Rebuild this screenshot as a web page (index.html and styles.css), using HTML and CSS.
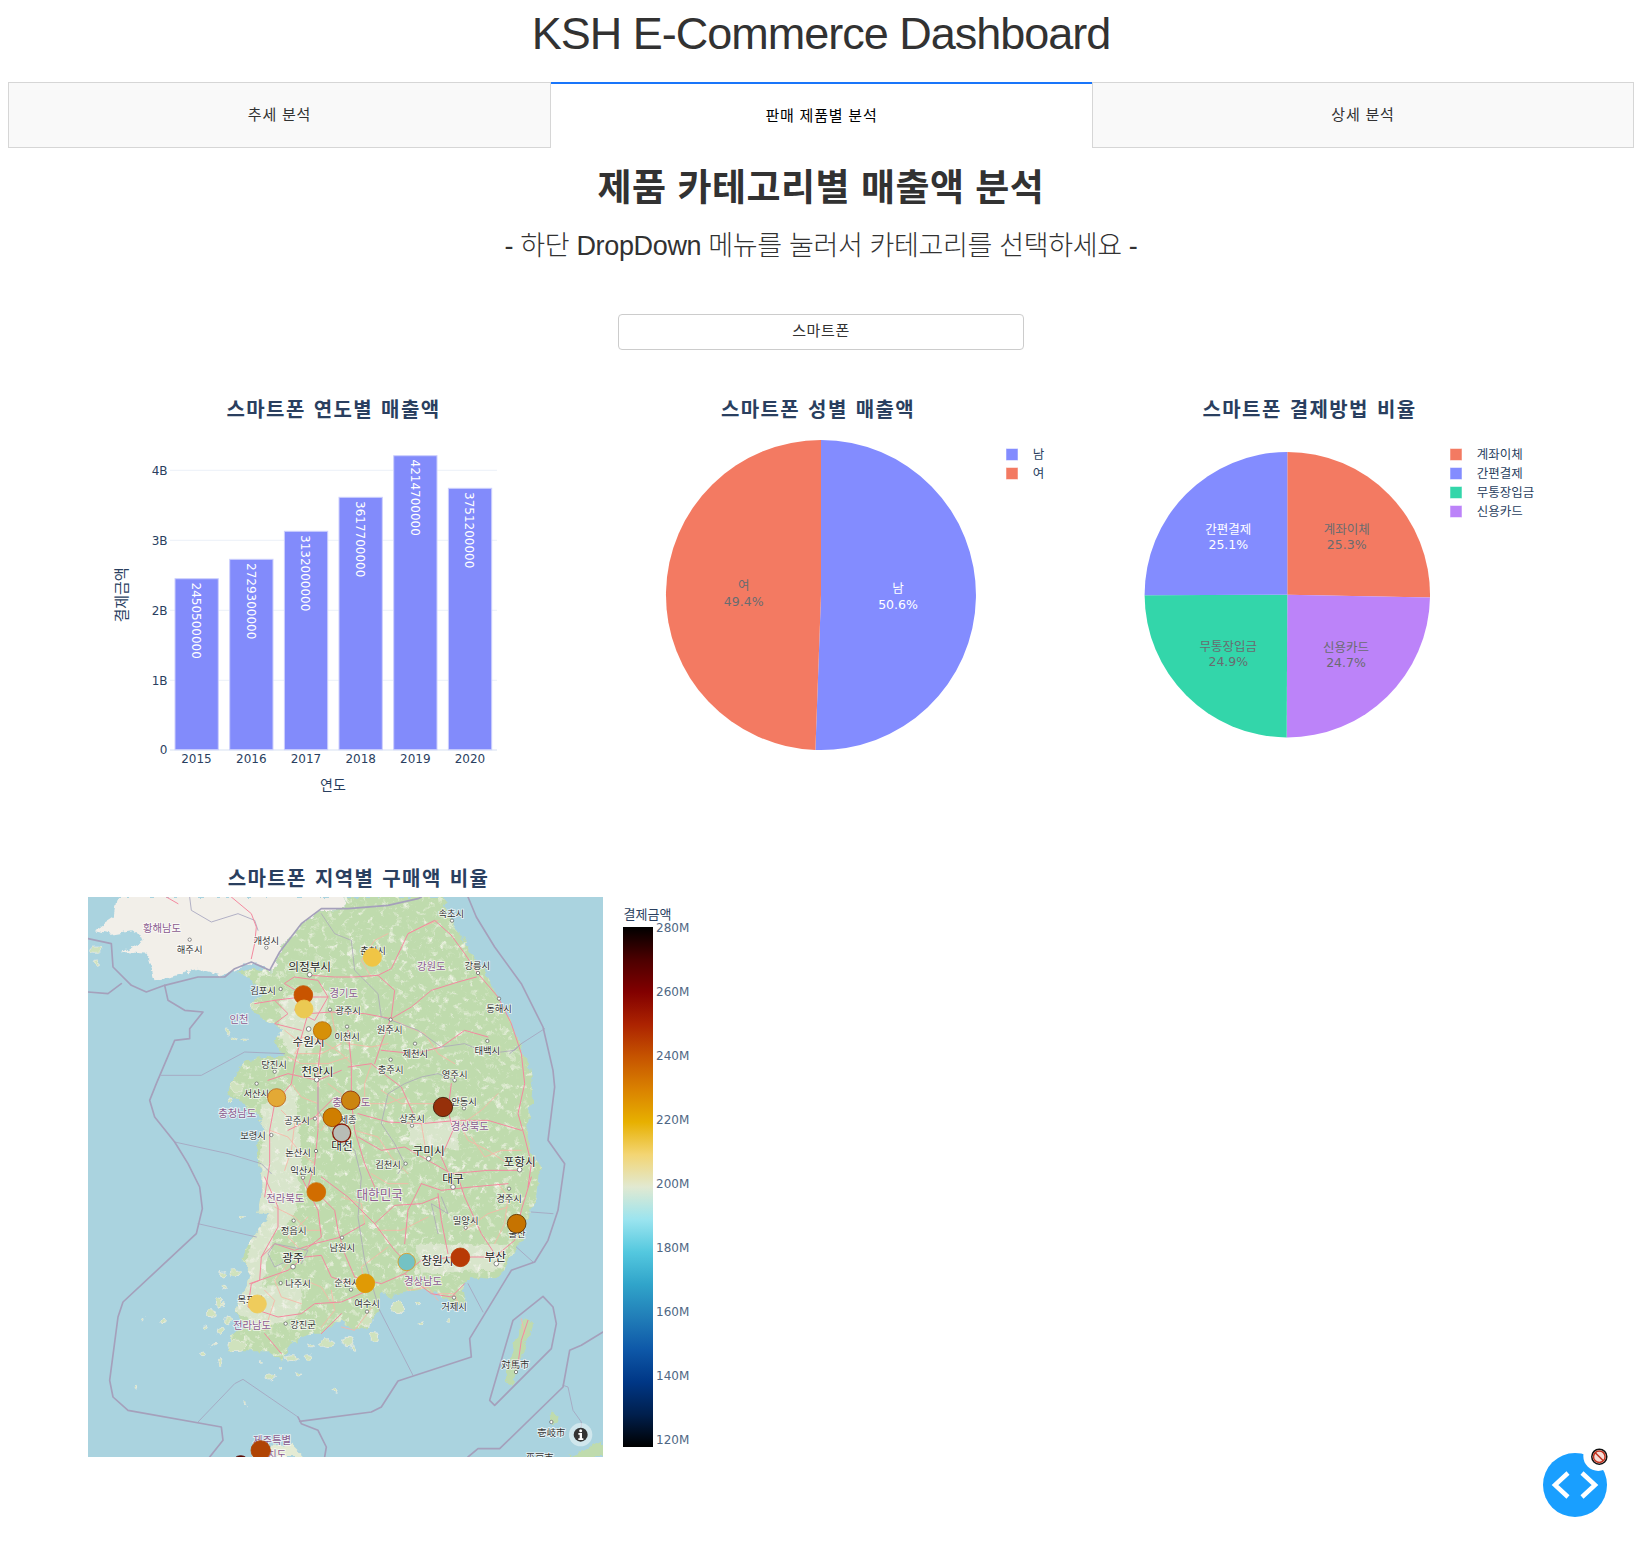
FILE: index.html
```html
<!DOCTYPE html>
<html lang="ko">
<head>
<meta charset="utf-8">
<title>KSH E-Commerce Dashboard</title>
<link rel="stylesheet" href="styles.css">
</head>
<body>
<h1 class="page-title">KSH E-Commerce Dashboard</h1>
<nav class="tabs">
  <div class="tab">추세 분석</div>
  <div class="tab tab-active">판매 제품별 분석</div>
  <div class="tab">상세 분석</div>
</nav>
<h2 class="section-title">제품 카테고리별 매출액 분석</h2>
<h3 class="section-sub">- 하단 DropDown 메뉴를 눌러서 카테고리를 선택하세요 -</h3>
<div class="dropdown-row"><div class="dropdown">스마트폰</div></div>

<section class="charts">
  <svg class="chart" viewBox="8 390 542 470" width="542" height="470">
    <text class="chart-title" x="333.5" y="408">스마트폰 연도별 매출액</text>
    <g class="grid">
      <line x1="170" x2="497" y1="470.3" y2="470.3"/>
      <line x1="170" x2="497" y1="540.3" y2="540.3"/>
      <line x1="170" x2="497" y1="610.3" y2="610.3"/>
      <line x1="170" x2="497" y1="680.3" y2="680.3"/>
    </g>
    <line class="zero" x1="170" x2="497" y1="750" y2="750"/>
    <g class="bars">
      <rect x="175" y="578.7" width="43.3" height="171"/>
      <rect x="229.7" y="559.3" width="43.3" height="190.4"/>
      <rect x="284.4" y="531.3" width="43.3" height="218.4"/>
      <rect x="339" y="497.3" width="43.3" height="252.4"/>
      <rect x="393.7" y="455.7" width="43.3" height="294"/>
      <rect x="448.4" y="488.3" width="43.3" height="261.4"/>
    </g>
    <g class="bar-labels">
      <text transform="translate(195.8 582.5) rotate(90)">2450500000</text>
      <text transform="translate(250.6 563) rotate(90)">2729300000</text>
      <text transform="translate(305.3 535) rotate(90)">3132000000</text>
      <text transform="translate(360 501) rotate(90)">3617700000</text>
      <text transform="translate(414.6 459.5) rotate(90)">4214700000</text>
      <text transform="translate(469.3 492) rotate(90)">3751200000</text>
    </g>
    <g class="y-ticks">
      <text x="167.5" y="471">4B</text>
      <text x="167.5" y="541">3B</text>
      <text x="167.5" y="610.5">2B</text>
      <text x="167.5" y="680.5">1B</text>
      <text x="167.5" y="750">0</text>
    </g>
    <g class="x-ticks">
      <text x="196.5" y="754">2015</text>
      <text x="251.3" y="754">2016</text>
      <text x="306" y="754">2017</text>
      <text x="360.7" y="754">2018</text>
      <text x="415.3" y="754">2019</text>
      <text x="470" y="754">2020</text>
    </g>
    <text class="axis-title" x="333" y="785">연도</text>
    <text class="axis-title axis-title-y" transform="translate(122 595) rotate(-90)">결제금액</text>
  </svg>

  <svg class="chart" viewBox="550 390 542 470" width="542" height="470">
    <text class="chart-title" x="818" y="408">스마트폰 성별 매출액</text>
    <path class="slice-blue" d="M821 595 L821 440 A155 155 0 1 1 815.4 749.9 Z"/>
    <path class="slice-red" d="M821 595 L815.4 749.9 A155 155 0 0 1 821 440 Z"/>
    <g class="pie-text-light">
      <text x="898" y="588">남</text>
      <text x="898" y="604">50.6%</text>
    </g>
    <g class="pie-text-dark">
      <text x="743.7" y="585">여</text>
      <text x="743.7" y="601.5">49.4%</text>
    </g>
    <rect class="swatch slice-blue" x="1006" y="448.5" width="12" height="12"/>
    <rect class="swatch slice-red" x="1006" y="467.5" width="12" height="12"/>
    <text class="legend-text" x="1032.7" y="454.3">남</text>
    <text class="legend-text" x="1032.7" y="473.3">여</text>
  </svg>

  <svg class="chart" viewBox="1092 390 542 470" width="542" height="470">
    <text class="chart-title" x="1309.5" y="408">스마트폰 결제방법 비율</text>
    <path class="slice-red" d="M1287.3 594.7 L1287.3 452 A142.7 142.7 0 0 1 1430 597.4 Z"/>
    <path class="slice-purple" d="M1287.3 594.7 L1430 597.4 A142.7 142.7 0 0 1 1286.7 737.4 Z"/>
    <path class="slice-green" d="M1287.3 594.7 L1286.7 737.4 A142.7 142.7 0 0 1 1144.6 595.3 Z"/>
    <path class="slice-blue" d="M1287.3 594.7 L1144.6 595.3 A142.7 142.7 0 0 1 1287.3 452 Z"/>
    <g class="pie-text-light">
      <text x="1228.3" y="529.5">간편결제</text>
      <text x="1228.3" y="544">25.1%</text>
    </g>
    <g class="pie-text-dark">
      <text x="1346.7" y="529">계좌이체</text>
      <text x="1346.7" y="544">25.3%</text>
      <text x="1228.3" y="646">무통장입금</text>
      <text x="1228.3" y="661">24.9%</text>
      <text x="1346" y="647">신용카드</text>
      <text x="1346" y="662">24.7%</text>
    </g>
    <rect class="swatch slice-red" x="1450" y="448.5" width="12" height="12"/>
    <rect class="swatch slice-blue" x="1450" y="467.5" width="12" height="12"/>
    <rect class="swatch slice-green" x="1450" y="486.5" width="12" height="12"/>
    <rect class="swatch slice-purple" x="1450" y="505.5" width="12" height="12"/>
    <text class="legend-text" x="1476.7" y="454.3">계좌이체</text>
    <text class="legend-text" x="1476.7" y="473.3">간편결제</text>
    <text class="legend-text" x="1476.7" y="492.3">무통장입금</text>
    <text class="legend-text" x="1476.7" y="511.5">신용카드</text>
  </svg>
</section>

<section class="map-section">
  <svg class="map-chart" viewBox="8 860 720 692" width="720" height="692">
    <defs>
      <linearGradient id="icefire" x1="0" y1="1" x2="0" y2="0">
        <stop offset="0" stop-color="#000000"/>
        <stop offset="0.0625" stop-color="#001f4d"/>
        <stop offset="0.125" stop-color="#003786"/>
        <stop offset="0.1875" stop-color="#0e58a8"/>
        <stop offset="0.25" stop-color="#217eb8"/>
        <stop offset="0.3125" stop-color="#30a4ca"/>
        <stop offset="0.375" stop-color="#54c8df"/>
        <stop offset="0.4375" stop-color="#9be4ef"/>
        <stop offset="0.5" stop-color="#e1e9d1"/>
        <stop offset="0.5625" stop-color="#f3d573"/>
        <stop offset="0.625" stop-color="#e7b000"/>
        <stop offset="0.6875" stop-color="#da8200"/>
        <stop offset="0.75" stop-color="#c65400"/>
        <stop offset="0.8125" stop-color="#ac2301"/>
        <stop offset="0.875" stop-color="#820000"/>
        <stop offset="0.9375" stop-color="#4c0000"/>
        <stop offset="1" stop-color="#000000"/>
      </linearGradient>
      <clipPath id="land-clip">
        <path d="M560 225 L580 150 L640 80 L700 40 L770 35 L770 0 L1062 0 L1090 70 L1140 150 L1200 240 L1235 310 L1280 400 L1320 500 L1335 570 L1325 640 L1315 720 L1335 780 L1365 810 L1350 840 L1345 900 L1325 950 L1300 1030 L1270 1080 L1240 1130 L1200 1145 L1150 1140 L1125 1165 L1135 1215 L1100 1230 L1060 1195 L1000 1180 L950 1190 L900 1200 L880 1180 L870 1240 L840 1290 L790 1300 L760 1270 L700 1310 L660 1310 L600 1350 L585 1395 L540 1360 L470 1360 L420 1360 L430 1320 L470 1280 L440 1240 L470 1180 L490 1130 L460 1080 L500 1010 L550 950 L510 950 L520 900 L520 820 L505 740 L530 690 L505 650 L465 620 L415 590 L445 530 L475 490 L540 480 L590 480 L555 430 L585 400 L535 370 L495 340 L485 320 L525 290 L485 240 L445 225 L500 215 Z"/>
      </clipPath>
      <filter id="mottle" x="0" y="0" width="100%" height="100%">
        <feTurbulence type="fractalNoise" baseFrequency="0.05" numOctaves="3" seed="7"/>
        <feColorMatrix type="matrix" values="0 0 0 0 0.93  0 0 0 0 0.93  0 0 0 0 0.86  3 0 0 0 -1.65"/>
      </filter>
      <filter id="rough" x="-5%" y="-5%" width="110%" height="110%">
        <feTurbulence type="fractalNoise" baseFrequency="0.04" numOctaves="3" seed="3" result="noise"/>
        <feDisplacementMap in="SourceGraphic" in2="noise" scale="24" xChannelSelector="R" yChannelSelector="G"/>
      </filter>
    </defs>

    <text class="chart-title" x="358.5" y="877">스마트폰 지역별 구매액 비율</text>

    <svg x="88" y="897" width="515" height="560" viewBox="0 0 1545 1680">
      <rect class="sea" width="1545" height="1680"/>
      <g class="rough">
        <path class="north" d="M90 0 L80 60 L20 100 L70 110 L130 100 L170 125 L105 165 L180 170 L200 250 L270 235 L330 215 L400 235 L470 205 L495 195 L540 222 L560 225 L580 150 L640 80 L700 40 L770 35 L770 0 Z"/>
        <path class="land" d="M560 225 L580 150 L640 80 L700 40 L770 35 L770 0 L1062 0 L1090 70 L1140 150 L1200 240 L1235 310 L1280 400 L1320 500 L1335 570 L1325 640 L1315 720 L1335 780 L1365 810 L1350 840 L1345 900 L1325 950 L1300 1030 L1270 1080 L1240 1130 L1200 1145 L1150 1140 L1125 1165 L1135 1215 L1100 1230 L1060 1195 L1000 1180 L950 1190 L900 1200 L880 1180 L870 1240 L840 1290 L790 1300 L760 1270 L700 1310 L660 1310 L600 1350 L585 1395 L540 1360 L470 1360 L420 1360 L430 1320 L470 1280 L440 1240 L470 1180 L490 1130 L460 1080 L500 1010 L550 950 L510 950 L520 900 L520 820 L505 740 L530 690 L505 650 L465 620 L415 590 L445 530 L475 490 L540 480 L590 480 L555 430 L585 400 L535 370 L495 340 L485 320 L525 290 L485 240 L445 225 L500 215 Z"/>
        <g clip-path="url(#land-clip)">
          <rect class="mottle" width="1545" height="1680"/>
          <path class="west-fields" d="M520 620 L620 560 L640 800 L620 960 L560 1010 L520 1170 L640 1150 L640 1250 L520 1300 L440 1240 L500 1000 L520 820 Z"/>
          <path class="west-fields" d="M580 300 L720 280 L700 440 L620 480 L570 420 Z"/>
          <path class="west-fields" d="M980 1040 L1260 1040 L1240 1120 L1000 1130 Z"/>
          <path class="west-fields" d="M960 680 L1120 660 L1110 760 L960 740 Z"/>
        </g>
        <path class="land" d="M1320 1265 L1335 1280 L1310 1350 L1290 1400 L1275 1460 L1250 1450 L1260 1410 L1285 1320 L1300 1275 Z"/>
        <path class="land" d="M1385 1540 L1412 1560 L1400 1585 L1380 1570 Z"/>
        <path class="land" d="M1545 1630 L1490 1660 L1440 1680 L1545 1680 Z"/>
        <path class="jeju" d="M490 1680 L500 1655 L560 1645 L610 1640 L640 1670 L640 1680 Z"/>
        <g class="isles">
          <ellipse cx="25" cy="158" rx="14" ry="8"/><ellipse cx="25" cy="200" rx="6" ry="5"/>
          <ellipse cx="500" cy="325" rx="13" ry="9"/><ellipse cx="415" cy="405" rx="8" ry="6"/><ellipse cx="440" cy="425" rx="7" ry="5"/><ellipse cx="470" cy="430" rx="8" ry="4"/>
          <ellipse cx="445" cy="570" rx="18" ry="12"/><ellipse cx="425" cy="610" rx="10" ry="7"/><ellipse cx="405" cy="1132" rx="10" ry="8"/><ellipse cx="440" cy="1130" rx="14" ry="9"/>
          <ellipse cx="370" cy="1250" rx="12" ry="12"/><ellipse cx="395" cy="1215" rx="10" ry="12"/><ellipse cx="400" cy="1300" rx="9" ry="12"/><ellipse cx="445" cy="1345" rx="28" ry="16"/>
          <ellipse cx="460" cy="962" rx="6" ry="6"/><ellipse cx="225" cy="1272" rx="7" ry="8"/><ellipse cx="162" cy="1264" rx="3" ry="5"/><ellipse cx="142" cy="1470" rx="4" ry="6"/>
          <ellipse cx="395" cy="1395" rx="8" ry="7"/><ellipse cx="345" cy="1372" rx="7" ry="4"/><ellipse cx="545" cy="1440" rx="14" ry="9"/><ellipse cx="625" cy="1434" rx="7" ry="6"/>
          <ellipse cx="740" cy="1480" rx="5" ry="6"/><ellipse cx="610" cy="1385" rx="18" ry="9"/><ellipse cx="660" cy="1380" rx="12" ry="7"/><ellipse cx="720" cy="1340" rx="26" ry="12"/>
          <ellipse cx="780" cy="1335" rx="18" ry="14"/><ellipse cx="860" cy="1320" rx="12" ry="10"/><ellipse cx="835" cy="1270" rx="20" ry="16"/><ellipse cx="930" cy="1230" rx="14" ry="20"/>
          <ellipse cx="990" cy="1218" rx="8" ry="5"/><ellipse cx="1000" cy="1280" rx="8" ry="4"/><ellipse cx="1085" cy="1275" rx="6" ry="4"/><ellipse cx="475" cy="1520" rx="4" ry="3"/>
          <ellipse cx="410" cy="1170" rx="8" ry="5"/><ellipse cx="350" cy="1290" rx="8" ry="6"/><ellipse cx="420" cy="1270" rx="7" ry="9"/><ellipse cx="375" cy="1340" rx="5" ry="4"/>
          <ellipse cx="520" cy="1395" rx="6" ry="4"/><ellipse cx="580" cy="1410" rx="6" ry="4"/><ellipse cx="670" cy="1345" rx="8" ry="5"/><ellipse cx="795" cy="1355" rx="6" ry="8"/>
        </g>
      </g>
      <g class="border-thin">
        <path d="M220 535 L340 535 L470 465 L590 470"/>
        <path d="M260 735 L420 770 L520 800 L550 830"/>
        <path d="M330 980 L505 1020"/>
        <path d="M330 1575 L440 1460 L465 1447 L630 1560"/>
        <path d="M975 1435 L875 1240"/>
        <path d="M1140 1160 L1185 1245"/>
        <path d="M1285 1050 L1335 1095"/>
        <path d="M1330 945 L1395 950"/>
        <path d="M1265 470 L1300 440 L1370 395"/>
        <path d="M1425 1465 L1440 1470 L1455 1540 L1480 1575 L1480 1610"/>
        <path d="M305 0 L310 40 L370 75 L450 50 L500 70 L510 100"/>
      </g>
      <g class="roads-minor">
        <path d="M960 110 L1000 90 L1050 70"/>
        <path d="M850 240 L820 190 L860 130 L900 110"/>
        <path d="M910 365 L960 390 L1010 410 L1050 470 L1100 500"/>
        <path d="M730 345 L740 400 L780 440 L850 450 L900 440"/>
        <path d="M640 420 L700 430 L760 470 L790 500"/>
        <path d="M850 500 L830 560 L830 620 L900 620 L950 600"/>
        <path d="M610 560 L640 600 L690 620"/>
        <path d="M545 700 L600 720 L640 770 L680 800"/>
        <path d="M800 700 L870 720 L910 780 L960 830"/>
        <path d="M1000 680 L1010 740 L1020 790"/>
        <path d="M1110 670 L1140 730 L1200 760 L1260 800"/>
        <path d="M1095 700 L1180 640 L1230 590"/>
        <path d="M560 930 L620 960 L660 1000 L700 1000"/>
        <path d="M870 1000 L940 1000 L980 980 L1020 960"/>
        <path d="M600 1100 L560 1150 L580 1200 L640 1220"/>
        <path d="M650 1150 L700 1170 L730 1220"/>
        <path d="M730 1180 L740 1240 L700 1290"/>
        <path d="M950 1150 L960 1180 L1020 1170 L1050 1210"/>
        <path d="M1050 1190 L1100 1190 L1110 1220"/>
        <path d="M760 1290 L800 1300 L860 1220"/>
        <path d="M1130 1000 L1200 950 L1260 930"/>
        <path d="M1300 1265 L1310 1310"/>
        <path d="M590 400 L640 440 L620 470 L700 470 L760 440"/>
        <path d="M600 480 L640 500 L720 500 L780 480"/>
        <path d="M720 560 L760 590 L740 640 L700 700"/>
        <path d="M880 580 L940 620 L1000 620 L1060 620"/>
        <path d="M580 640 L620 680 L610 760 L590 820"/>
        <path d="M850 830 L900 860 L960 860"/>
        <path d="M1150 720 L1190 780 L1240 760 L1300 760"/>
        <path d="M1230 860 L1260 900 L1250 980 L1220 1040"/>
        <path d="M760 900 L820 920 L830 980"/>
        <path d="M660 960 L600 1020 L640 1060"/>
        <path d="M900 1050 L860 1080 L820 1110 L830 1160"/>
        <path d="M530 1180 L560 1210 L530 1300"/>
      </g>
      <g class="roads">
        <path d="M1090 115 L1040 70 L960 110 L910 215 L870 235 L800 240 L740 240 L670 235"/>
        <path d="M1090 115 L1130 170 L1170 230 L1230 300 L1270 380 L1300 470 L1310 560 L1290 650 L1310 720 L1330 800 L1320 870"/>
        <path d="M870 235 L920 280 L910 360 L880 440 L860 500"/>
        <path d="M1165 240 L1110 255 L1030 280 L970 330 L910 365 L830 350 L730 345 L660 350"/>
        <path d="M660 350 L640 420 L620 500 L610 560 L560 620 L545 700 L545 800 L530 900"/>
        <path d="M700 430 L690 520 L690 620 L690 700 L680 800 L660 870"/>
        <path d="M780 400 L790 500 L790 610 L800 700 L830 800 L860 870"/>
        <path d="M1090 560 L1080 640 L1095 700 L1060 780 L1095 860"/>
        <path d="M810 650 L900 675 L1000 680 L1110 670 L1200 670 L1300 700"/>
        <path d="M500 320 L560 310 L640 300 L720 300"/>
        <path d="M880 460 L980 470 L1060 450 L1130 400 L1200 420"/>
        <path d="M780 510 L850 500 L900 540 L940 570 L980 660"/>
        <path d="M540 550 L600 530 L690 550 L760 520"/>
        <path d="M810 720 L880 760 L950 750 L1020 790 L1090 830 L1200 820 L1290 820"/>
        <path d="M600 700 L680 660 L740 600"/>
        <path d="M590 260 L640 290 L620 340 L680 370 L720 300 L690 250 L620 240 Z"/>
        <path d="M560 310 L600 350 L560 380 L640 400"/>
        <path d="M235 0 L270 20"/>
        <path d="M430 0 L490 50 L505 90 L500 140 L490 185"/>
        <path d="M685 885 L740 940 L750 1000 L770 1070 L800 1140 L880 1160 L950 1130 L1000 1090 L1100 1080 L1220 1080 L1280 1030 L1300 940 L1330 840"/>
        <path d="M530 840 L570 930 L570 990 L520 1080 L515 1150 L490 1160 L480 1230 L570 1260 L640 1250 L680 1220 L760 1215 L830 1185"/>
        <path d="M485 1160 L600 1120 L650 1080 L700 1075 L730 1140 L790 1160"/>
        <path d="M640 840 L690 940 L700 1020 L650 1060"/>
        <path d="M860 980 L920 1060 L950 1090"/>
        <path d="M1000 860 L960 940 L950 1040"/>
        <path d="M1050 890 L1060 970 L1080 1070"/>
        <path d="M830 980 L760 1020 L680 1040 L620 1060 L560 1040 L520 1080"/>
        <path d="M700 840 L780 900 L860 980 L920 925 L1000 920 L1050 900"/>
        <path d="M1110 840 L1130 900 L1180 1010 L1220 1070"/>
        <path d="M1000 860 L1060 880 L1150 870 L1260 860"/>
        <path d="M950 1130 L1030 1190 L1090 1200 L1130 1160"/>
        <path d="M530 1310 L580 1370"/>
        <path d="M700 1310 L760 1250"/>
        <path d="M1320 1270 L1300 1330 L1290 1400"/>
      </g>
      <g class="border-prov">
        <path d="M700 50 L740 110 L790 130 L800 220 L870 290 L880 360 L910 370 L990 400 L1060 450 L1130 440 L1200 470 L1280 460 L1300 440"/>
        <path d="M1100 550 L1050 530 L1000 540 L950 560 L900 590 L880 680 L920 740 L950 800 L930 830"/>
        <path d="M690 570 L690 640 L740 720 L800 760 L820 840 L810 960 L830 1090 L875 1240"/>
        <path d="M1060 900 L1080 950 L1030 920 L1050 1010"/>
        <path d="M600 1090 L560 1110 L540 1070 L560 1040 L660 1060 L640 1100"/>
      </g>
      <g class="border-main">
        <path d="M0 125 L70 140 L75 210 L130 265 L175 285 L230 265 L330 240 L410 240 L440 215 L490 195 L545 220 L575 165 L640 80 L700 35 L780 35 L900 25 L990 5 L1000 0"/>
        <path d="M0 285 L60 290 L100 260"/>
        <path d="M230 265 L240 310 L290 340 L345 345 L305 395 L305 425 L260 430 L205 560 L185 610 L200 660 L260 735 L300 800 L335 870 L343 935 L325 1010 L105 1215 L90 1260 L65 1450 L75 1500 L120 1540 L400 1590 L405 1630 L365 1680"/>
        <path d="M635 1573 L850 1545 L880 1530 L930 1452 L1150 1380 L1145 1325 L1270 1120 L1340 1095 L1380 1030 L1410 940 L1420 870 L1430 800 L1380 730 L1400 570 L1395 520 L1365 390 L1300 260 L1220 150 L1165 60 L1140 0"/>
        <path d="M630 1560 L640 1580 L690 1600 L715 1650 L710 1680"/>
        <path d="M1205 1510 L1275 1270 L1365 1198 L1395 1230 L1405 1280 L1390 1355 L1220 1525 Z"/>
        <path d="M1140 1680 L1170 1655 L1235 1655 L1425 1470 L1445 1360 L1480 1345 L1545 1305"/>
      </g>
      <g class="city-dots">
        <circle cx="1092" cy="71" r="5"/><circle cx="305" cy="128" r="5"/><circle cx="535" cy="152" r="5"/><circle cx="1170" cy="228" r="5"/>
        <circle cx="665" cy="233" r="7"/><circle cx="578" cy="276" r="5"/><circle cx="726" cy="338" r="5"/><circle cx="1233" cy="305" r="5"/>
        <circle cx="662" cy="396" r="7"/><circle cx="777" cy="389" r="5"/><circle cx="908" cy="368" r="5"/><circle cx="981" cy="440" r="5"/>
        <circle cx="1198" cy="432" r="5"/><circle cx="908" cy="488" r="5"/><circle cx="560" cy="524" r="5"/><circle cx="686" cy="548" r="7"/>
        <circle cx="1100" cy="550" r="5"/><circle cx="506" cy="560" r="5"/><circle cx="1128" cy="634" r="5"/><circle cx="681" cy="665" r="5"/>
        <circle cx="972" cy="686" r="5"/><circle cx="550" cy="714" r="5"/><circle cx="684" cy="762" r="5"/><circle cx="953" cy="800" r="5"/>
        <circle cx="1022" cy="785" r="7"/><circle cx="1295" cy="818" r="7"/><circle cx="645" cy="842" r="5"/><circle cx="1095" cy="870" r="7"/>
        <circle cx="1263" cy="875" r="5"/><circle cx="1133" cy="992" r="5"/><circle cx="617" cy="971" r="5"/><circle cx="762" cy="1022" r="5"/>
        <circle cx="1225" cy="1100" r="7"/><circle cx="615" cy="1109" r="7"/><circle cx="578" cy="1158" r="5"/><circle cx="789" cy="1178" r="5"/>
        <circle cx="837" cy="1244" r="5"/><circle cx="1098" cy="1202" r="5"/><circle cx="593" cy="1280" r="5"/><circle cx="1284" cy="1425" r="5"/><circle cx="1390" cy="1575" r="5"/>
      </g>
      <g class="map-label">
        <text x="305" y="156">해주시</text><text x="535" y="129">개성시</text><text x="1090" y="47">속초시</text><text x="855" y="160">춘천시</text>
        <text x="1168" y="205">강릉시</text><text x="525" y="278">김포시</text><text x="780" y="340">광주시</text><text x="1233" y="334">동해시</text>
        <text x="777" y="418">이천시</text><text x="905" y="396">원주시</text><text x="982" y="468">제천시</text><text x="1198" y="458">태백시</text>
        <text x="908" y="517">충주시</text><text x="558" y="500">당진시</text><text x="1100" y="530">영주시</text><text x="505" y="587">서산시</text>
        <text x="1128" y="613">안동시</text><text x="627" y="668">공주시</text><text x="780" y="667">세종</text><text x="972" y="664">상주시</text>
        <text x="495" y="715">보령시</text><text x="630" y="766">논산시</text><text x="900" y="801">김천시</text><text x="645" y="820">익산시</text>
        <text x="1263" y="903">경주시</text><text x="1133" y="970">밀양시</text><text x="617" y="998">정읍시</text><text x="1287" y="1008">울산</text>
        <text x="763" y="1050">남원시</text><text x="630" y="1158">나주시</text><text x="777" y="1156">순천시</text><text x="487" y="1206">목포시</text>
        <text x="837" y="1219">여수시</text><text x="1098" y="1228">거제시</text><text x="645" y="1281">강진군</text><text x="1282" y="1402">対馬市</text>
        <text x="1390" y="1605">壱岐市</text><text x="1355" y="1680">平戸市</text>
      </g>
      <g class="map-label map-label-big">
        <text x="665" y="204">의정부시</text><text x="662" y="431">수원시</text><text x="688" y="520">천안시</text><text x="762" y="741">대전</text>
        <text x="1022" y="757">구미시</text><text x="1295" y="790">포항시</text><text x="1095" y="840">대구</text><text x="1222" y="1074">부산</text>
        <text x="1048" y="1087">창원시</text><text x="615" y="1078">광주</text>
      </g>
      <g class="map-label map-label-region">
        <text x="222" y="90">황해남도</text><text x="1030" y="204">강원도</text><text x="767" y="286">경기도</text><text x="453" y="364">인천</text>
        <text x="790" y="612">충청북도</text><text x="448" y="646">충청남도</text><text x="1145" y="685">경상북도</text><text x="592" y="900">전라북도</text>
        <text class="country" x="875" y="890">대한민국</text><text x="1005" y="1149">경상남도</text><text x="492" y="1281">전라남도</text><text x="552" y="1628">제주특별</text><text x="552" y="1670">자치도</text>
      </g>
      <circle class="pin pin-a" cx="853" cy="181" r="27"/>
      <circle class="pin pin-b" cx="646" cy="294" r="28"/>
      <circle class="pin pin-c" cx="648" cy="336" r="27"/>
      <circle class="pin pin-d" cx="703" cy="401" r="27"/>
      <circle class="pin pin-e" cx="566" cy="602" r="27"/>
      <circle class="pin pin-f" cx="788" cy="610" r="28"/>
      <circle class="pin pin-g" cx="733" cy="661" r="28"/>
      <circle class="pin pin-h" cx="761" cy="708" r="27"/>
      <circle class="pin pin-i" cx="1065" cy="630" r="29"/>
      <circle class="pin pin-j" cx="685" cy="885" r="28"/>
      <circle class="pin pin-k" cx="1286" cy="980" r="28"/>
      <circle class="pin pin-l" cx="1117" cy="1081" r="28"/>
      <circle class="pin pin-m" cx="956" cy="1095" r="26"/>
      <circle class="pin pin-n" cx="832" cy="1159" r="28"/>
      <circle class="pin pin-o" cx="508" cy="1221" r="27"/>
      <circle class="pin pin-p" cx="518" cy="1660" r="29"/>
      <circle class="pin pin-q" cx="458" cy="1702" r="26"/>
      <circle class="info-halo" cx="1478" cy="1613" r="35"/>
      <circle class="info-disc" cx="1478" cy="1613" r="21"/>
      <circle class="info-mark" cx="1478" cy="1601" r="4.5"/>
      <path class="info-mark" d="M1471 1608 H1482 V1624 H1486 V1629 H1471 V1624 H1475 V1613 H1471 Z"/>
    </svg>

    <text class="cb-title" x="623.5" y="914">결제금액</text>
    <rect class="colorbar" x="623" y="927" width="30" height="520"/>
    <g class="cb-ticks">
      <text x="656" y="928">280M</text>
      <text x="656" y="992">260M</text>
      <text x="656" y="1056">240M</text>
      <text x="656" y="1120">220M</text>
      <text x="656" y="1184">200M</text>
      <text x="656" y="1248">180M</text>
      <text x="656" y="1312">160M</text>
      <text x="656" y="1376">140M</text>
      <text x="656" y="1440">120M</text>
    </g>
  </svg>
</section>

<aside class="debug-fab">
  <svg viewBox="0 0 110 110" width="110" height="110">
    <circle class="fab-disc" cx="55" cy="55" r="32"/>
    <path class="fab-chevron" d="M48 43 L35 55 L48 67 M62 43 L75 55 L62 67"/>
    <circle class="fab-badge" cx="78.3" cy="26" r="15"/>
    <circle class="fab-ban-edge" cx="79.3" cy="26.7" r="7.5"/>
    <circle class="fab-ban-ring" cx="79.3" cy="26.7" r="5.8"/>
    <path class="fab-ban-bar" d="M75.3 22.7 L83.3 30.7"/>
  </svg>
</aside>
</body>
</html>
```
FILE: styles.css
```css
html, body { background: #fff; }
body {
  margin: 0 8px;
  width: 1626px;
  position: relative;
  height: 1552px;
  overflow: hidden;
  color: #323232;
  font-family: "Liberation Sans", "Noto Sans CJK KR", sans-serif;
}
.page-title {
  margin: 0;
  height: 82px;
  padding-top: 7px;
  box-sizing: border-box;
  text-align: center;
  font-size: 45px;
  line-height: 54px;
  font-weight: 400;
  letter-spacing: -1px;
}
.tabs { display: grid; grid-template-columns: 543px 541px 542px; height: 66px; }
.tab {
  display: flex;
  align-items: center;
  justify-content: center;
  box-sizing: border-box;
  background: #f9f9f9;
  border: 1px solid #d6d6d6;
  font-size: 15px;
  letter-spacing: .8px;
  color: #323232;
  padding-bottom: 4px;
}
.tab + .tab { border-left: 0; }
.tab-active {
  background: #fff;
  border: 0;
  border-top: 2px solid #1975fa;
  color: #000;
}
.tab-active + .tab { border-left: 1px solid #d6d6d6; }
.section-title {
  margin: 0;
  height: 76px;
  padding-top: 3px;
  box-sizing: border-box;
  text-align: center;
  font-size: 37px;
  line-height: 76px;
  font-weight: 700;
  letter-spacing: .5px;
}
.section-sub {
  margin: 0;
  height: 42px;
  padding-top: 1px;
  box-sizing: border-box;
  text-align: center;
  font-size: 27px;
  line-height: 42px;
  font-weight: 300;
  letter-spacing: -.35px;
}
.dropdown-row { display: flex; justify-content: center; padding-top: 48px; }
.dropdown {
  width: 406px;
  height: 36px;
  box-sizing: border-box;
  border: 1px solid #ccc;
  border-radius: 4px;
  text-align: center;
  font-size: 15px;
  line-height: 32px;
  letter-spacing: .6px;
  color: #333;
}
.charts { display: grid; grid-template-columns: repeat(3, 542px); margin-top: 40px; height: 470px; }
.chart, .map-chart { display: block; }
.map-section { height: 692px; }

svg text { font-family: "DejaVu Sans", "Noto Sans CJK KR", sans-serif; dominant-baseline: central; }
.chart-title {
  font-family: "Noto Sans CJK KR", sans-serif;
  font-size: 20px;
  font-weight: 700;
  fill: #2a3f5f;
  text-anchor: middle;
  letter-spacing: 1.4px;
  word-spacing: 1px;
}
.grid line { stroke: #ebf0f8; stroke-width: 1; }
.zero { stroke: #ebf0f8; stroke-width: 2; }
.bars rect { fill: #828bfb; stroke: #cdd0fd; stroke-width: 1; }
.bar-labels text { font-size: 12px; fill: #fff; }
.y-ticks text { font-size: 12px; fill: #2a3f5f; text-anchor: end; }
.x-ticks text { font-size: 12px; fill: #2a3f5f; text-anchor: middle; dominant-baseline: hanging; }
.axis-title { font-size: 14px; fill: #2a3f5f; text-anchor: middle; }
.axis-title-y { font-size: 15px; }
.slice-blue { fill: #838cff; }
.slice-red { fill: #f37a62; }
.slice-green { fill: #33d6aa; }
.slice-purple { fill: #bc83f9; }
.swatch { stroke: #fff; stroke-opacity: .5; stroke-width: 1; }
.pie-text-light text { font-size: 12.5px; fill: #fff; text-anchor: middle; }
.pie-text-dark text { font-size: 12.5px; fill: #696c70; text-anchor: middle; }
.legend-text { font-size: 12.5px; fill: #2a3f5f; }

.sea { fill: #aad3df; }
.north { fill: #f2efe9; }
.land { fill: #bfdbad; }
.jeju { fill: #e4ebd4; }
.rough { filter: url(#rough); }
.mottle { filter: url(#mottle); }
.west-fields { fill: #f2efe9; opacity: .5; }
.isles ellipse { fill: #cfe2bd; stroke: #f2efe9; stroke-width: 2; }
.border-thin path, .border-prov path, .border-main path, .roads path, .roads-minor path {
  fill: none;
  stroke-linejoin: round;
  stroke-linecap: round;
}
.border-thin path { stroke: #a5a3be; stroke-width: 2.5; }
.border-prov path { stroke: #ada9b8; stroke-width: 2.5; }
.border-main path { stroke: #a5a0bb; stroke-width: 5; }
.roads path { stroke: #f4899f; stroke-width: 3; }
.roads-minor path { stroke: #f9b4a6; stroke-width: 2.5; }
.city-dots circle { fill: #fff; stroke: #555; stroke-width: 2; }
.map-label text {
  font-family: "Noto Sans CJK KR", sans-serif;
  font-size: 28px;
  fill: #333;
  text-anchor: middle;
  paint-order: stroke;
  stroke: #fff;
  stroke-opacity: .75;
  stroke-width: 5px;
}
.map-label-big text { font-size: 35px; fill: #222; }
.map-label-region text { font-size: 31px; fill: #8b5c8e; }
.map-label-region text.country { font-size: 38px; }
.pin { stroke-width: 2.5; }
.pin-a { fill: #f0c545; stroke: #f0c545; }
.pin-b { fill: #c85400; stroke: #c85400; }
.pin-c { fill: #ebc952; stroke: #ebc952; }
.pin-d { fill: #d69008; stroke: #b8690a; }
.pin-e { fill: #e3a935; stroke: #c0661a; }
.pin-f { fill: #cb8510; stroke: #8a2a0a; }
.pin-g { fill: #cf7e00; stroke: #a04800; }
.pin-h { fill: #b8bdb6; stroke: #8a1a0a; stroke-width: 4; }
.pin-i { fill: #96300a; stroke: #3a1a0a; }
.pin-j { fill: #d16d00; stroke: #d16d00; }
.pin-k { fill: #c67300; stroke: #5a3000; }
.pin-l { fill: #b83a05; stroke: #b83a05; }
.pin-m { fill: #74c2c4; stroke: #de9a20; }
.pin-n { fill: #e09a05; stroke: #e09a05; }
.pin-o { fill: #efcc5c; stroke: #efcc5c; }
.pin-p { fill: #b04404; stroke: #b04404; }
.pin-q { fill: #5a0a04; stroke: #5a0a04; }
.info-halo { fill: #fff; fill-opacity: .45; }
.info-disc { fill: #333; }
.info-mark { fill: #fff; }
.colorbar { fill: url(#icefire); }
.cb-title { font-size: 13px; fill: #2a3f5f; }
.cb-ticks text { font-size: 12px; fill: #506784; }

.debug-fab { position: absolute; left: 1512px; top: 1430px; width: 110px; height: 110px; }
.debug-fab svg { display: block; }
.fab-disc { fill: #199fff; }
.fab-chevron { fill: none; stroke: #fff; stroke-width: 4.5; }
.fab-badge { fill: #fff; }
.fab-ban-edge { fill: #fff; stroke: #111; stroke-width: 1.5; }
.fab-ban-ring { fill: #f8dcd6; stroke: #c0301c; stroke-width: 1.5; }
.fab-ban-bar { stroke: #c0301c; stroke-width: 1.5; }
```
